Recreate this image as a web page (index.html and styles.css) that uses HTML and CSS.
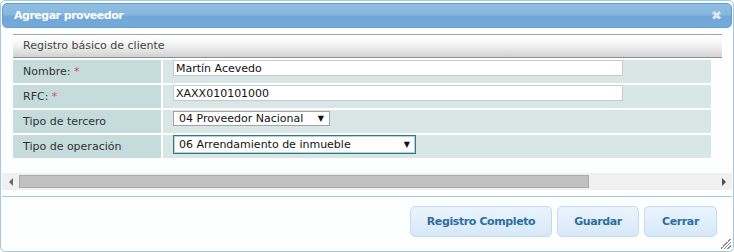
FILE: index.html
```html
<!DOCTYPE html>
<html>
<head>
    <title>Agregar proveedor</title>
    <link rel="stylesheet" href="styles.css">
</head>
<body>
    <div class="dialog">
        <div class="titlebar">
            <span class="title">Agregar proveedor</span>
            <span class="close">&#10006;</span>
        </div>
        <div class="content">
            <div class="panel">
                <div class="panel-head">Registro básico de cliente</div>
                <div class="form">
                    <div class="label">Nombre: <span class="req">*</span></div>
                    <div class="field"><input type="text" class="text" value="Martín Acevedo"></div>

                    <div class="label">RFC: <span class="req">*</span></div>
                    <div class="field"><input type="text" class="text" value="XAXX010101000"></div>

                    <div class="label">Tipo de tercero</div>
                    <div class="field"><span class="select short">04 Proveedor Nacional</span></div>

                    <div class="label">Tipo de operación</div>
                    <div class="field"><span class="select long focused">06 Arrendamiento de inmueble</span></div>
                </div>
            </div>
            <div class="hscroll">
                <span class="arrow left"></span>
                <div class="track"><div class="thumb"></div></div>
                <span class="arrow right"></span>
            </div>
        </div>
        <div class="buttonpane">
            <button class="btn btn-wide">Registro Completo</button>
            <button class="btn btn-save">Guardar</button>
            <button class="btn btn-close">Cerrar</button>
        </div>
        <div class="grip"></div>
    </div>
</body>
</html>
```

FILE: styles.css
```css
body {
    margin: 0;
    background: #ffffff;
    font-family: "DejaVu Sans", Verdana, sans-serif;
    font-size: 11px;
    color: #333;
}
.dialog {
    position: relative;
    width: 730px;
    height: 248px;
    padding: 2px 1px 0 1px;
    border: 1px solid #a6c9e2;
    border-radius: 5px;
    background: #fdfefe;
    box-sizing: content-box;
}
.titlebar {
    display: flex;
    align-items: center;
    justify-content: space-between;
    height: 23px;
    padding: 0 9px 0 11px;
    border: 1px solid #5d9fd8;
    border-radius: 5px;
    background: linear-gradient(to bottom, #90bde2 0%, #88b8df 45%, #70a7d7 55%, #76aad8 100%);
    color: #fff;
}
.title {
    font-weight: bold;
    font-size: 11px;
    letter-spacing: -0.5px;
}
.close {
    font-size: 13px;
    color: #dfe7ef;
    font-weight: bold;
}
.content {
    height: 162px;
    padding-top: 6px;
    box-sizing: border-box;
    display: flex;
    flex-direction: column;
}
.panel {
    margin: 0 10px 0 11px;
    flex: 1;
}
.panel-head {
    height: 22px;
    line-height: 22px;
    padding-left: 10px;
    border-top: 1px solid #a5a5a5;
    border-bottom: 1px solid #8e8e8e;
    background: linear-gradient(to bottom, #ffffff 0%, #f6f6f6 40%, #d2d2d2 100%);
    color: #444;
}
.form {
    display: grid;
    grid-template-columns: 148px 548px;
    grid-auto-rows: 23px;
    gap: 2px;
    padding-top: 2px;
}
.label {
    background: #c5dbdc;
    padding-left: 10px;
    line-height: 23px;
    color: #333;
}
.req {
    color: #e0405a;
}
.field {
    background: #d8e6e6;
    padding-left: 10px;
}
.text {
    display: block;
    width: 450px;
    height: 16px;
    margin: 0;
    padding: 0 2px;
    border: 1px solid #c2cccc;
    box-sizing: border-box;
    font-family: "DejaVu Sans", Verdana, sans-serif;
    font-size: 11px;
    color: #111;
    background: #fff;
}
.select {
    position: relative;
    display: block;
    margin-top: 1px;
    height: 15px;
    line-height: 14px;
    padding-left: 5px;
    border: 1px solid #a3a3a3;
    box-sizing: border-box;
    background: #fff;
    color: #111;
}
.select.short {
    width: 157px;
}
.select.long {
    margin-top: 0;
    width: 243px;
    height: 19px;
    line-height: 17px;
}
.select.focused {
    border: 1px solid #2b7b86;
    box-shadow: inset 0 0 0 1px #b7d3d6;
}
.select::after {
    content: "\25BC";
    position: absolute;
    right: 5px;
    top: 0;
    font-size: 8px;
    color: #111;
}
.hscroll {
    display: flex;
    align-items: center;
    height: 17px;
    background: #f0f0f0;
}
.arrow {
    width: 0;
    height: 0;
    border-top: 4px solid transparent;
    border-bottom: 4px solid transparent;
}
.arrow.left {
    margin: 0 6px 0 7px;
    border-right: 4px solid #6a6a6a;
}
.arrow.right {
    margin: 0 6px 0 5px;
    border-left: 4px solid #505050;
}
.track {
    flex: 1;
    height: 13px;
}
.thumb {
    width: 570px;
    height: 13px;
    background: #c1c1c1;
    border: 1px solid #a8a8a8;
    box-sizing: border-box;
}
.buttonpane {
    display: flex;
    justify-content: flex-end;
    gap: 5px;
    margin-top: 6px;
    padding: 9px 15px 0 0;
    border-top: 1px solid #a6c9e2;
}
.btn {
    height: 31px;
    padding: 0;
    border: 1px solid #c5dbec;
    border-radius: 5px;
    background: linear-gradient(to bottom, #e9f3fc 0%, #e2effb 50%, #d6e8f8 100%);
    color: #2e6e9e;
    font-family: "DejaVu Sans", Verdana, sans-serif;
    font-size: 11px;
    font-weight: bold;
    letter-spacing: -0.4px;
}
.btn-wide {
    width: 142px;
}
.btn-save {
    width: 82px;
}
.btn-close {
    width: 73px;
}
.grip {
    position: absolute;
    right: 2px;
    bottom: 2px;
    width: 10px;
    height: 10px;
    background: linear-gradient(135deg, transparent 0 45%, #8a8a8a 45% 52%, transparent 52% 62%, #8a8a8a 62% 69%, transparent 69% 79%, #8a8a8a 79% 86%, transparent 86%);
}
```
